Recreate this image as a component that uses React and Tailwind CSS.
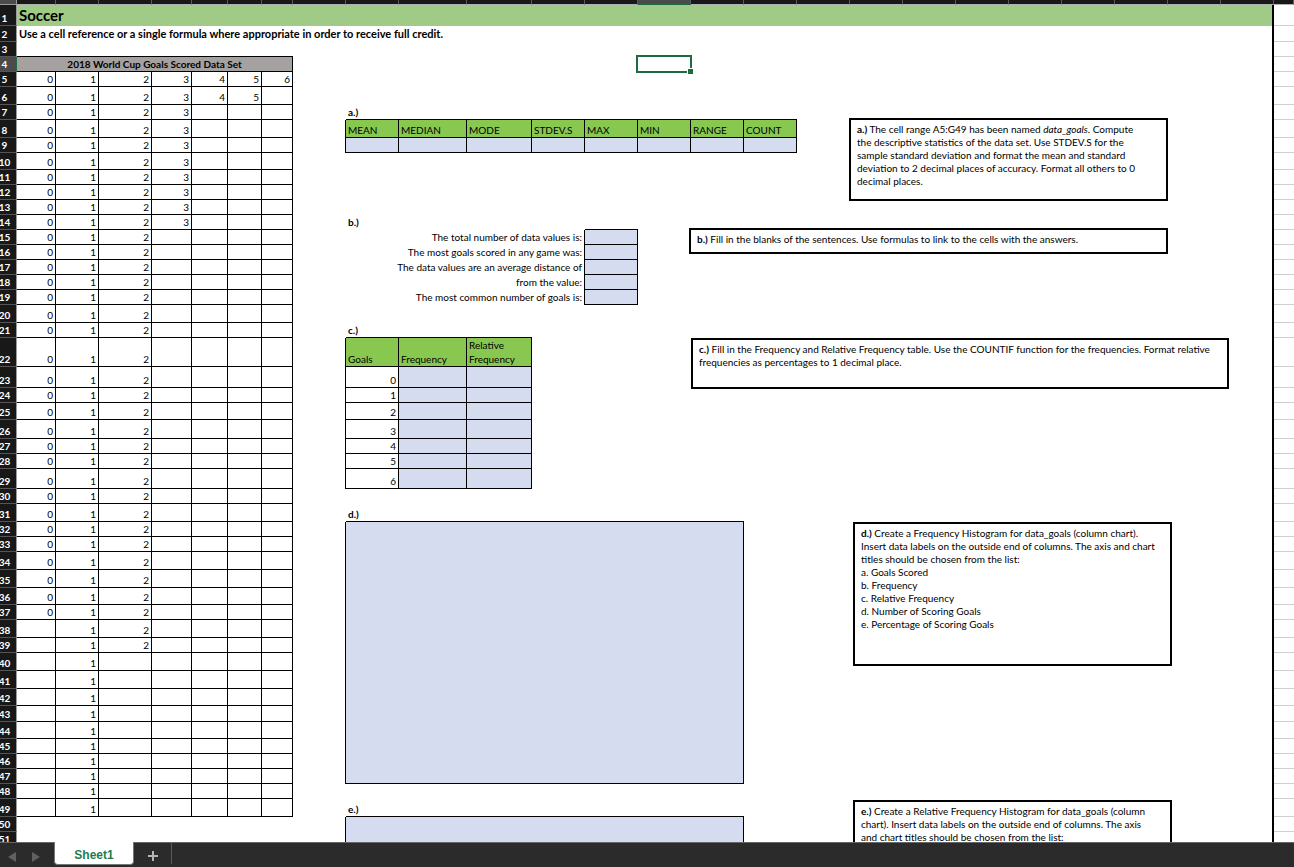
import React from "react";
import clsx from "clsx";

const columns = [
  { name: "A", width: 39 },
  { name: "B", width: 43 },
  { name: "C", width: 53 },
  { name: "D", width: 40 },
  { name: "E", width: 36 },
  { name: "F", width: 34 },
  { name: "G", width: 31 },
  { name: "H", width: 53 },
  { name: "I", width: 53 },
  { name: "J", width: 68 },
  { name: "K", width: 65 },
  ...["L", "M", "N", "O", "P", "Q", "R", "S", "T", "U", "V", "W", "X", "Y"].map(
    (name) => ({ name, width: 53 })
  ),
  { name: "Z" },
];

const DEFAULT_HEIGHT = 15;
const ROW_COUNT = 51;
const rowHeights = {
  1: 21, 2: 16, 6: 18, 8: 18, 10: 17, 20: 18, 22: 29, 23: 21, 25: 17, 26: 19,
  29: 20, 31: 18, 34: 18, 35: 18, 36: 17, 38: 18, 40: 18, 41: 18, 42: 17,
  43: 16, 44: 17, 49: 18,
};

// last row that holds each goal value, all of them start on row 5
const lastRow = { A: 37, B: 49, C: 39, D: 14, E: 6, F: 6, G: 5 };

// outlined ranges: first column, first row, last column, last row
const grids = [
  ["A", 4, "G", 49],
  ["I", 8, "P", 9],
  ["M", 15, "M", 19],
  ["I", 22, "K", 29],
  ["I", 32, "O", 47],
  ["I", 50, "O", 51],
];

const answers = [
  ["I", 9, "P", 9],
  ["M", 15, "M", 19],
  ["J", 23, "K", 29],
  ["I", 32, "O", 47],
  ["I", 50, "O", 51],
];

const headings = [
  ["I", 8, "P", 8],
  ["I", 22, "K", 22],
];

const cells = {
  A1: { text: "Soccer", colSpan: 25, className: "bg-[#a0cb87] text-[15px] leading-5 font-bold" },
  A2: {
    text: "Use a cell reference or a single formula where appropriate in order to receive full credit.",
    colSpan: 25,
    className: "text-[11px] leading-[14px] font-bold",
  },
  A4: {
    text: "2018 World Cup Goals Scored Data Set",
    colSpan: 7,
    className: "bg-[#a6a1a1] text-center font-bold",
  },
  I7: { text: "a.)", className: "font-bold" },
  I8: { text: "MEAN" },
  J8: { text: "MEDIAN" },
  K8: { text: "MODE" },
  L8: { text: "STDEV.S" },
  M8: { text: "MAX" },
  N8: { text: "MIN" },
  O8: { text: "RANGE" },
  P8: { text: "COUNT" },
  I14: { text: "b.)", className: "font-bold" },
  I15: { text: "The total number of data values is:", colSpan: 4, className: "text-right" },
  I16: { text: "The most goals scored in any game was:", colSpan: 4, className: "text-right" },
  I17: { text: "The data values are an average distance of", colSpan: 4, className: "text-right" },
  I18: { text: "from the value:", colSpan: 4, className: "text-right" },
  I19: { text: "The most common number of goals is:", colSpan: 4, className: "text-right" },
  I21: { text: "c.)", className: "font-bold" },
  I22: { text: "Goals" },
  J22: { text: "Frequency" },
  K22: { text: "Relative Frequency", wrap: true },
  I31: { text: "d.)", className: "font-bold" },
  I32: { colSpan: 7, rowSpan: 16 },
  I49: { text: "e.)", className: "font-bold" },
  I50: { colSpan: 7, rowSpan: 2 },
};

Object.entries(lastRow).forEach(([col, last], value) => {
  for (let row = 5; row <= last; row++) {
    cells[`${col}${row}`] = { text: value, className: "text-right" };
  }
});

for (let goals = 0; goals <= 6; goals++) {
  cells[`I${23 + goals}`] = { text: goals, className: "text-right" };
}

const colIndex = (name) => columns.findIndex((c) => c.name === name);

const inRange = (ranges, col, row) =>
  ranges.some(
    ([c1, r1, c2, r2]) =>
      col >= colIndex(c1) && col <= colIndex(c2) && row >= r1 && row <= r2
  );

// cells hidden under a merged neighbour
const covered = new Set();
Object.entries(cells).forEach(([ref, { colSpan = 1, rowSpan = 1 }]) => {
  const col = colIndex(ref[0]);
  const row = Number(ref.slice(1));
  for (let r = row; r < row + rowSpan; r++) {
    for (let c = col; c < col + colSpan; c++) {
      if (r !== row || c !== col) covered.add(`${columns[c].name}${r}`);
    }
  }
});

const Cell = ({ col, row }) => {
  const ref = `${columns[col].name}${row}`;
  if (covered.has(ref)) return null;

  const { text, colSpan = 1, rowSpan = 1, wrap, className } = cells[ref] || {};
  const inside = inRange(grids, col, row);
  const pageEdge = col + colSpan - 1 === colIndex("Y");
  const rightLine = inside || inRange(grids, col + colSpan, row);
  const bottomLine = inside || inRange(grids, col, row + rowSpan);
  const gridLine = columns[col].name === "Z";

  return (
    <td
      colSpan={colSpan}
      rowSpan={rowSpan}
      className={clsx(
        "pt-0 pl-0.5 align-bottom",
        wrap ? "whitespace-normal" : "whitespace-nowrap",
        pageEdge && "border-r-2 border-r-black",
        rightLine && "border-r border-r-black",
        rightLine || pageEdge ? "pr-0.5" : "pr-[3px]",
        bottomLine && "border-b border-b-black",
        gridLine && "border-b border-b-[#cfcfcf]",
        bottomLine || gridLine ? "pb-0" : "pb-px",
        inRange(answers, col, row) && "bg-[#d5dcef]",
        inRange(headings, col, row) && "bg-[#88c850]",
        ref === "N4" && "relative",
        className
      )}
    >
      {text}
      {ref === "N4" && (
        <span className="absolute -top-0.5 -right-px -bottom-px -left-0.5 border-2 border-[#1d6b41]">
          <span className="absolute -right-[3px] -bottom-[3px] size-1.5 border-t border-l border-white bg-[#1d6b41]" />
        </span>
      )}
    </td>
  );
};

const Sheet = () => (
  <table className="-ml-[7px] w-[calc(100%+7px)] table-fixed border-separate border-spacing-0">
    <colgroup>
      <col className="w-6" />
      {columns.map(({ name, width }) => (
        <col key={name} style={width ? { width } : undefined} />
      ))}
    </colgroup>
    <thead>
      <tr className="h-[5px]">
        <th className="border-r border-b border-[#9b9b9b] bg-[#4b4b4b] p-0" />
        {columns.map(({ name }) => (
          <th
            key={name}
            aria-label={name}
            className={clsx(
              "border-r border-b border-r-[#5a5a5a] p-0",
              name === "N" ? "border-b-[#1d6b41] bg-[#4b4b4b]" : "border-b-[#b0b0b0] bg-[#181818]"
            )}
          />
        ))}
      </tr>
    </thead>
    <tbody>
      {Array.from({ length: ROW_COUNT }, (_, i) => i + 1).map((row) => (
        <tr key={row} style={{ height: rowHeights[row] || DEFAULT_HEIGHT }}>
          <th
            scope="row"
            className={clsx(
              "border-r border-b border-b-[#555555] p-0 text-center align-bottom font-bold text-white",
              row === 4 ? "border-r-[#1d6b41] bg-[#4b4b4b]" : "border-r-[#9b9b9b] bg-[#181818]"
            )}
          >
            {row}
          </th>
          {columns.map(({ name }, col) => (
            <Cell key={name} col={col} row={row} />
          ))}
        </tr>
      ))}
    </tbody>
  </table>
);

const Note = ({ label, className, children }) => (
  <div className={clsx("absolute border-2 border-black bg-white px-1.5 py-[3px] leading-[13px]", className)}>
    <b>{label}</b> {children}
  </div>
);

const Notes = () => (
  <>
    <Note label="a.)" className="top-[118px] left-[849px] h-[83px] w-[319px]">
      The cell range A5:G49 has been named <i>data_goals</i>. Compute
      <br />
      the descriptive statistics of the data set. Use STDEV.S for the
      <br />
      sample standard deviation and format the mean and standard
      <br />
      deviation to 2 decimal places of accuracy. Format all others to 0
      <br />
      decimal places.
    </Note>
    <Note label="b.)" className="top-[228px] left-[689px] h-[26px] w-[479px]">
      Fill in the blanks of the sentences. Use formulas to link to the cells with the answers.
    </Note>
    <Note label="c.)" className="top-[338px] left-[691px] h-[51px] w-[538px]">
      Fill in the Frequency and Relative Frequency table. Use the COUNTIF function for the frequencies. Format relative
      <br />
      frequencies as percentages to 1 decimal place.
    </Note>
    <Note label="d.)" className="top-[522px] left-[853px] h-36 w-[319px]">
      Create a Frequency Histogram for data_goals (column chart).
      <br />
      Insert data labels on the outside end of columns. The axis and chart
      <br />
      titles should be chosen from the list:
      <br />
      a. Goals Scored
      <br />
      b. Frequency
      <br />
      c. Relative Frequency
      <br />
      d. Number of Scoring Goals
      <br />
      e. Percentage of Scoring Goals
    </Note>
    <Note label="e.)" className="top-[800px] left-[853px] h-36 w-[319px]">
      Create a Relative Frequency Histogram for data_goals (column
      <br />
      chart). Insert data labels on the outside end of columns. The axis
      <br />
      and chart titles should be chosen from the list:
    </Note>
  </>
);

const TabBar = () => (
  <footer className="flex h-[25px] shrink-0 items-start border-t border-[#666666] bg-[#2b2b2b] font-['Liberation_Sans',sans-serif]">
    <div className="flex h-6 w-[54px] items-center gap-4 pt-1 pl-2">
      <button type="button" aria-label="Previous sheet">
        <svg width="8" height="10" viewBox="0 0 8 10" className="block fill-[#606060]">
          <path d="M8 0v10L0 5z" />
        </svg>
      </button>
      <button type="button" aria-label="Next sheet">
        <svg width="8" height="10" viewBox="0 0 8 10" className="block fill-[#606060]">
          <path d="M0 0v10l8-5z" />
        </svg>
      </button>
    </div>
    <button
      type="button"
      className="-mt-px h-[23px] w-20 rounded-b-sm border-x border-b border-[#777777] bg-white pt-1 text-xs font-bold text-[#1f7d4b]"
    >
      Sheet1
    </button>
    <button
      type="button"
      aria-label="Add sheet"
      className="flex h-[21px] w-[38px] items-center justify-center border-r border-[#5a5a5a] pt-1"
    >
      <svg width="10" height="10" viewBox="0 0 10 10" className="fill-none stroke-[#b4b4b4] stroke-2">
        <path d="M5 0v10M0 5h10" />
      </svg>
    </button>
  </footer>
);

const App = () => (
  <div className="flex h-screen flex-col bg-white font-[Lato,sans-serif] text-[10px] leading-[14px] text-black">
    <main className="relative min-h-0 flex-1 overflow-hidden">
      <Sheet />
      <Notes />
    </main>
    <TabBar />
  </div>
);

export default App;
